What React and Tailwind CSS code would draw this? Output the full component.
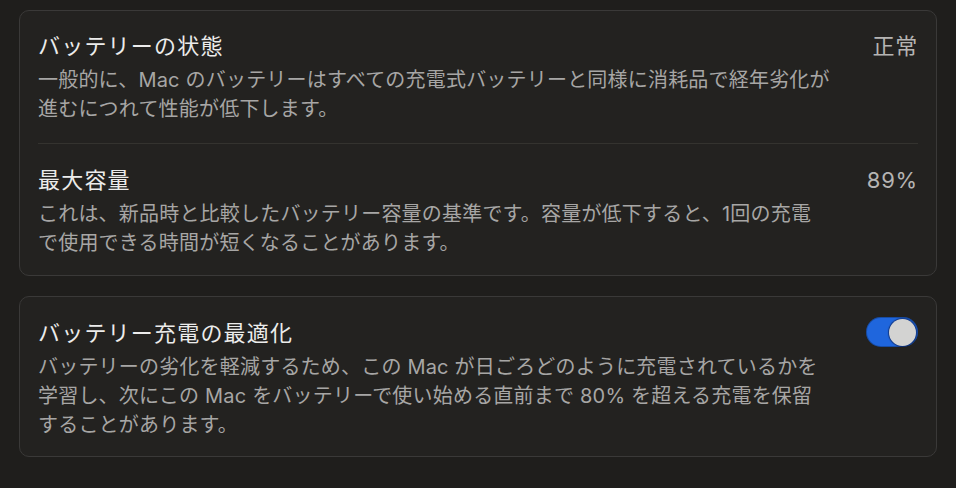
import React from "react";

const font = { fontFamily: 'Inter, "Noto Sans CJK JP", "Noto Sans", sans-serif' };

function Title({ children }) {
  return (
    <div className="text-[22px] leading-[30px] font-normal tracking-[1.2px] text-[#ececeb] whitespace-nowrap">
      {children}
    </div>
  );
}

function Desc({ lines }) {
  return (
    <div className="mt-[5px] text-[20px] leading-[29px] tracking-[0.2px] text-[#a7a6a5]">
      {lines.map((l, i) => (
        <div key={i} className="whitespace-nowrap">
          {l}
        </div>
      ))}
    </div>
  );
}

function Value({ children }) {
  return (
    <div className="text-[22px] leading-[30px] tracking-[0.8px] text-[#b5b4b3] whitespace-nowrap">
      {children}
    </div>
  );
}

function Toggle() {
  return (
    <div className="mt-[-1px] flex h-[30px] w-[52px] items-center justify-end rounded-full bg-[#1f66dd] px-[2px] shadow-[inset_0_0_0_1px_rgba(0,0,0,0.25)]">
      <div className="h-[27px] w-[27px] rounded-full bg-[#d3d3d2] shadow-[0_0_1px_1px_rgba(0,0,30,0.45)]" />
    </div>
  );
}

export default function App() {
  return (
    <div
      className="h-[488px] w-[956px] bg-[#1f1e1c] pt-[10px] pl-[19px] pr-[19px]"
      style={font}
    >
      <div className="rounded-[10px] border border-[#3a3938] bg-[#232220] px-[18px]">
        <div className="flex items-start justify-between pt-[20px] pb-[19px]">
          <div>
            <Title>バッテリーの状態</Title>
            <Desc
              lines={[
                "一般的に、Mac のバッテリーはすべての充電式バッテリーと同様に消耗品で経年劣化が",
                "進むにつれて性能が低下します。",
              ]}
            />
          </div>
          <Value>正常</Value>
        </div>
        <div className="h-px bg-[#34332f]" />
        <div className="flex items-start justify-between pt-[21px] pb-[17px]">
          <div>
            <Title>最大容量</Title>
            <Desc
              lines={[
                "これは、新品時と比較したバッテリー容量の基準です。容量が低下すると、1回の充電",
                "で使用できる時間が短くなることがあります。",
              ]}
            />
          </div>
          <Value>89%</Value>
        </div>
      </div>

      <div className="mt-[20px] rounded-[10px] border border-[#3a3938] bg-[#232220] px-[18px]">
        <div className="flex items-start justify-between pt-[21px] pb-[16px]">
          <div>
            <Title>バッテリー充電の最適化</Title>
            <Desc
              lines={[
                "バッテリーの劣化を軽減するため、この Mac が日ごろどのように充電されているかを",
                "学習し、次にこの Mac をバッテリーで使い始める直前まで 80% を超える充電を保留",
                "することがあります。",
              ]}
            />
          </div>
          <Toggle />
        </div>
      </div>
    </div>
  );
}
